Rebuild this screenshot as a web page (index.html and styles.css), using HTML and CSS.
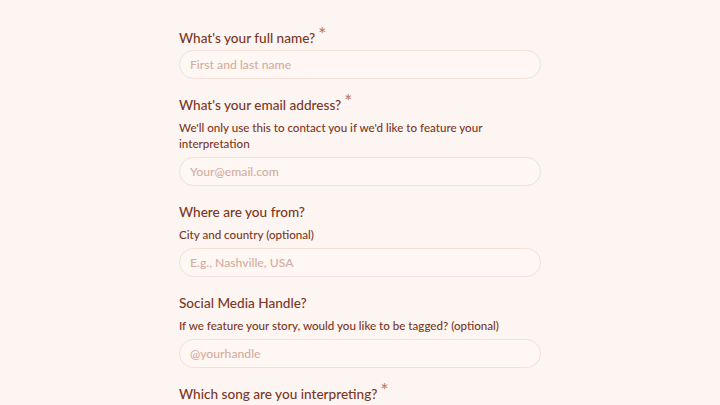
FILE: index.html
```html
<!DOCTYPE html>
<html lang="en">

<head>
    <meta charset="UTF-8">
    <meta name="viewport" content="width=device-width, initial-scale=1.0">
    <title>Share your interpretation</title>
    <link rel="stylesheet" href="styles.css">
</head>

<body>
    <form class="story-form">
        <div class="field">
            <label for="name">What's your full name?<span class="req">*</span></label>
            <input id="name" type="text" placeholder="First and last name">
        </div>

        <div class="field">
            <label for="email">What's your email address?<span class="req">*</span></label>
            <p class="hint">We'll only use this to contact you if we'd like to feature your interpretation</p>
            <input id="email" type="email" placeholder="Your@email.com">
        </div>

        <div class="field">
            <label for="place">Where are you from?</label>
            <p class="hint">City and country (optional)</p>
            <input id="place" type="text" placeholder="E.g., Nashville, USA">
        </div>

        <div class="field">
            <label for="handle">Social Media Handle?</label>
            <p class="hint">If we feature your story, would you like to be tagged? (optional)</p>
            <input id="handle" type="text" placeholder="@yourhandle">
        </div>

        <div class="field">
            <label for="song">Which song are you interpreting?<span class="req">*</span></label>
        </div>
    </form>
</body>

</html>
```

FILE: styles.css
```css
body {
    margin: 0;
    background-color: #fdf5f1;
    font-family: Lato, "Noto Sans", sans-serif;
    color: #7a3725;
}

.story-form {
    width: 362px;
    margin: 0 auto;
    padding-top: 28px;
}

.field {
    margin-bottom: 16px;
}

.field label {
    display: block;
    font-size: 13.6px;
    font-weight: 500;
    line-height: 20px;
    margin-bottom: 2px;
}

.req {
    color: #c0806c;
    font-size: 19px;
    font-weight: 500;
    line-height: 0;
    vertical-align: 2px;
    margin-left: 3px;
}

.hint {
    font-size: 11.6px;
    font-weight: 500;
    line-height: 16px;
    margin: 5px 0 5px;
}

.field input {
    display: block;
    box-sizing: border-box;
    width: 100%;
    height: 29px;
    padding: 0 10px;
    border: 1.5px solid #f4e0d7;
    border-radius: 15px;
    background-color: #fef7f3;
    font-family: inherit;
    font-size: 12.2px;
    font-weight: 500;
    color: #7a3725;
    outline: none;
}

.field input::placeholder {
    color: #d3ad9f;
}
```
